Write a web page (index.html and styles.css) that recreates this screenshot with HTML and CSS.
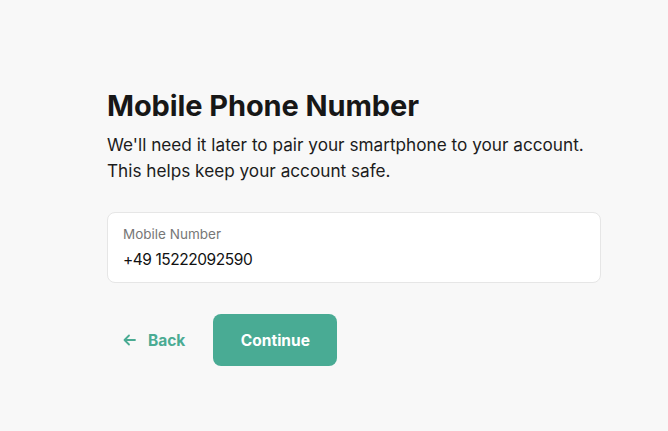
FILE: index.html
```html
<!DOCTYPE html>
<html>
<head>
<meta charset="utf-8">
<link rel="stylesheet" href="styles.css">
</head>
<body>
<main class="page">
  <section class="panel">
    <h1 class="title">Mobile Phone Number</h1>
    <p class="lead">We'll need it later to pair your smartphone to your account. This helps keep your account safe.</p>
    <div class="field">
      <label class="field-label">Mobile Number</label>
      <div class="field-value">+49 15222092590</div>
    </div>
    <div class="actions">
      <button class="back">
        <svg class="arrow" width="13" height="12" viewBox="0 0 13 12"><path d="M6 1.5 1.5 6 6 10.5M1.5 6H12" fill="none" stroke="currentColor" stroke-width="1.8" stroke-linecap="round" stroke-linejoin="round"/></svg>
        <span>Back</span>
      </button>
      <button class="continue">Continue</button>
    </div>
  </section>
</main>
</body>
</html>
```
FILE: styles.css
```css
html, body { margin: 0; padding: 0; }
body {
  background: #f8f8f8;
  font-family: Inter, "Liberation Sans", Arial, sans-serif;
  color: #1a1a1a;
  width: 668px;
  height: 431px;
  overflow: hidden;
}
.page { padding: 86px 0 0 107px; }
.panel { width: 494px; }
.title {
  margin: 0;
  font-size: 29px;
  font-weight: 650;
  line-height: 40px;
  letter-spacing: -0.1px;
  color: #171717;
}
.lead {
  margin: 6px 0 0;
  font-size: 17.2px;
  line-height: 26px;
  color: #1c1c1c;
}
.field {
  margin-top: 28px;
  background: #fff;
  border: 1px solid #e6e6e6;
  border-radius: 8px;
  height: 69px;
  box-sizing: content-box;
  padding: 0 15px;
  display: flex;
  flex-direction: column;
}
.field-label {
  margin-top: 12px;
  font-size: 13.5px;
  line-height: 18px;
  color: #777;
}
.field-value {
  margin-top: 7px;
  font-size: 15.5px;
  line-height: 20px;
  letter-spacing: -0.45px;
  color: #111;
}
.actions {
  margin-top: 31px;
  display: flex;
  align-items: center;
  gap: 28px;
}
.back {
  display: flex;
  align-items: center;
  gap: 12px;
  background: none;
  border: 0;
  padding: 0 0 0 16px;
  font: inherit;
  font-size: 15.5px;
  font-weight: 700;
  color: #4aab93;
}
.arrow { display: block; }
.continue {
  width: 124px;
  height: 52px;
  border: 0;
  border-radius: 8px;
  background: #49ab94;
  color: #fff;
  font: inherit;
  font-size: 15.5px;
  font-weight: 700;
}
```
